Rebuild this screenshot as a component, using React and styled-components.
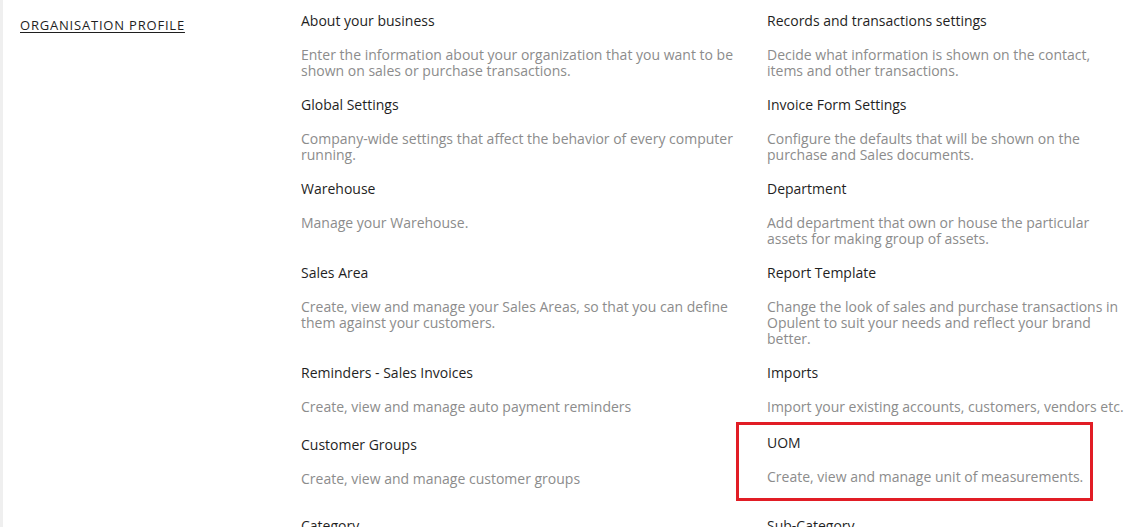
import styled, { createGlobalStyle } from 'styled-components';

const GlobalStyle = createGlobalStyle`
  html, body {
    margin: 0;
    padding: 0;
    background: #ffffff;
  }
  body {
    font-family: 'Open Sans', 'Liberation Sans', sans-serif;
    overflow: hidden;
  }
`;

const settings = [
  {
    title: 'About your business',
    text: 'Enter the information about your organization that you want to be shown on sales or purchase transactions.',
  },
  {
    title: 'Records and transactions settings',
    text: 'Decide what information is shown on the contact, items and other transactions.',
  },
  {
    title: 'Global Settings',
    text: 'Company-wide settings that affect the behavior of every computer running.',
  },
  {
    title: 'Invoice Form Settings',
    text: 'Configure the defaults that will be shown on the purchase and Sales documents.',
  },
  { title: 'Warehouse', text: 'Manage your Warehouse.' },
  {
    title: 'Department',
    text: 'Add department that own or house the particular assets for making group of assets.',
  },
  {
    title: 'Sales Area',
    text: 'Create, view and manage your Sales Areas, so that you can define them against your customers.',
  },
  {
    title: 'Report Template',
    text: 'Change the look of sales and purchase transactions in Opulent to suit your needs and reflect your brand better.',
  },
  {
    title: 'Reminders - Sales Invoices',
    text: 'Create, view and manage auto payment reminders',
  },
  {
    title: 'Imports',
    text: 'Import your existing accounts, customers, vendors etc.',
  },
  {
    title: 'Customer Groups',
    text: 'Create, view and manage customer groups',
  },
  {
    title: 'UOM',
    text: 'Create, view and manage unit of measurements.',
    highlighted: true,
  },
  { title: 'Category', text: 'Create, view and manage item categories' },
  { title: 'Sub-Category', text: 'Create, view and manage item sub categories' },
];

export default function App() {
  return (
    <>
      <GlobalStyle />
      <Page>
        <Sidebar>
          <SectionLabel>ORGANISATION PROFILE</SectionLabel>
        </Sidebar>
        <SettingsGrid>
          {settings.map((item) => (
            <SettingItem key={item.title} $highlighted={item.highlighted}>
              <SettingTitle>{item.title}</SettingTitle>
              <SettingText>{item.text}</SettingText>
            </SettingItem>
          ))}
        </SettingsGrid>
      </Page>
    </>
  );
}

const Page = styled.div`
  display: flex;
  align-items: flex-start;
  min-height: 100vh;
  border-left: 3px solid #efefef;
  box-sizing: border-box;
`;

const Sidebar = styled.div`
  width: 281px;
  flex-shrink: 0;
  padding: 13px 0 0 17px;
`;

const SectionLabel = styled.a`
  display: inline-block;
  font-size: 13px;
  line-height: 16px;
  font-weight: 500;
  letter-spacing: 0.8px;
  color: #1f1f1f;
  text-decoration: underline;
  text-underline-offset: 2px;
  cursor: pointer;
`;

const SettingsGrid = styled.div`
  display: grid;
  grid-template-columns: 440px 358px;
  column-gap: 26px;
  align-items: start;
  padding-top: 13px;
`;

const SettingItem = styled.div`
  position: relative;
  margin-top: ${({ $highlighted }) => ($highlighted ? '-2px' : '0')};
  padding-bottom: ${({ $highlighted }) => ($highlighted ? '11px' : '0')};

  &::after {
    content: '';
    display: ${({ $highlighted }) => ($highlighted ? 'block' : 'none')};
    position: absolute;
    left: -31px;
    top: -13px;
    width: 357px;
    height: 79px;
    border: 3px solid #e11d25;
    box-sizing: border-box;
    pointer-events: none;
  }
`;

const SettingTitle = styled.div`
  font-size: 14px;
  line-height: 16px;
  font-weight: 500;
  color: #1f1f1f;
  margin-bottom: 18px;
`;

const SettingText = styled.div`
  font-size: 14px;
  line-height: 16px;
  min-height: 20px;
  color: #8c8c8c;
  margin-bottom: 18px;
`;
